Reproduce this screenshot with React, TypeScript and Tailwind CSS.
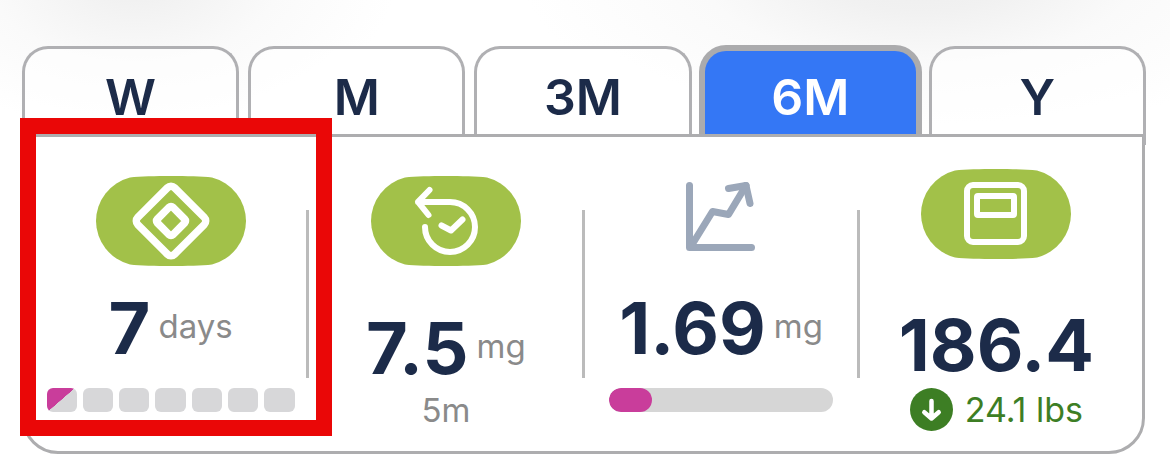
import type { ReactNode } from "react";

const ranges = ["W", "M", "3M", "6M", "Y"];

function Pill({ children }: { children: ReactNode }) {
  return (
    <svg viewBox="0 0 150 90" className="h-[90px] w-[150px] shrink-0" fill="none" aria-hidden="true">
      <path
        d="M0 45A45 45 0 0 1 34 1.500C44 .3 60 0 75 0S106 .3 116 1.500A45 45 0 0 1 150 45A45 45 0 0 1 116 88.500C106 89.700 90 90 75 90S44 89.700 34 88.500A45 45 0 0 1 0 45Z"
        fill="#a2c149"
      />
      {children}
    </svg>
  );
}

function Value({ value, unit }: { value: string; unit?: string }) {
  return (
    <p className="flex items-center justify-center gap-2 whitespace-nowrap">
      <span className="text-[72px] leading-[72px] font-bold text-[#1c2b49]">{value}</span>
      {unit && <span className="pb-1 text-[33px] leading-10 text-[#8a8a8a]">{unit}</span>}
    </p>
  );
}

function Cell({ children, divider = true, overlay }: { children: ReactNode; divider?: boolean; overlay?: ReactNode }) {
  return (
    <section className="relative flex min-w-0 flex-1">
      <div className="flex min-w-0 flex-1 flex-col items-center">{children}</div>
      {divider && <span className="-mr-px -ml-0.5 mt-[73px] h-[168px] w-[3px] shrink-0 bg-[#bbbbbb]" />}
      {overlay}
    </section>
  );
}

export default function App() {
  return (
    <main className="w-full overflow-hidden bg-white bg-[radial-gradient(ellipse_260px_150px_at_135px_-20px,#eeeeee,#fafafa_55%,transparent),radial-gradient(ellipse_400px_170px_at_920px_-30px,#ededed,#f1f1f1_25%,#fafafa_55%,transparent)] pt-[45px] pr-[25px] pb-[18px] pl-[22px] font-['Inter','Liberation_Sans',sans-serif]">
      <nav aria-label="Time range" className="-mr-px flex h-[89px] items-end gap-[9px]">
        {ranges.map((range) =>
          range === "6M" ? (
            <button
              key={range}
              type="button"
              aria-pressed="true"
              className="-mx-0.5 h-[89px] flex-1 rounded-t-[27px] border-[6px] border-b-0 border-[#ababad] bg-[#3477f5] pt-2 text-[50px] leading-[60px] font-semibold text-white"
            >
              {range}
            </button>
          ) : (
            <button
              key={range}
              type="button"
              aria-pressed="false"
              className="relative h-[88px] flex-1 rounded-t-[26px] border-[3px] border-b-0 border-[#b0b0b3] bg-white/50 pt-2.5 text-[50px] leading-[60px] font-semibold text-[#1c2b49]"
            >
              {range}
              {range === "Y" && <span className="absolute top-full -right-[3px] h-[11px] w-[3px] bg-[#b0b0b3]" />}
            </button>
          ),
        )}
      </nav>

      <div className="flex rounded-b-[36px] border-[3px] border-[#adadaf] bg-white px-2 pb-5">
        <Cell
          overlay={
            <span className="pointer-events-none absolute -top-[19px] -right-6 -bottom-[5px] -left-[13px] z-10 border-[16px] border-[#ea0707]" />
          }
        >
          <div className="mt-[39px] mb-[26px] flex">
            <Pill>
              <g stroke="#fff" strokeWidth="7.500">
                <rect x="49" y="19" width="52" height="52" rx="5" transform="rotate(45 75 45)" />
                <rect x="64" y="34" width="22" height="22" rx="2.500" transform="rotate(45 75 45)" />
              </g>
            </Pill>
          </div>
          <Value value="7" unit="days" />
          <div className="mt-6 flex w-[248px] gap-1.5">
            {[0, 1, 2, 3, 4, 5, 6].map((day) => (
              <span
                key={day}
                className={
                  day === 0
                    ? "h-6 flex-1 rounded-md bg-[linear-gradient(139deg,#c93d9b_48%,#d7d7d9_49%)]"
                    : "h-6 flex-1 rounded-md bg-[#d7d7d9]"
                }
              />
            ))}
          </div>
        </Cell>

        <Cell>
          <div className="mt-[39px] mb-[46px] flex">
            <Pill>
              <g stroke="#fff" strokeWidth="6" strokeLinecap="round" strokeLinejoin="round">
                <path d="M58.500 14 47 25.800 57.500 39M47 26H79A25 25 0 1 1 54 51" />
                <path d="M70.500 49.500 80 54.500 91.500 43.500" />
              </g>
            </Pill>
          </div>
          <Value value="7.5" unit="mg" />
          <p className="mt-1.5 text-[33px] leading-10 text-[#8a8a8a]">5m</p>
        </Cell>

        <Cell>
          <svg
            viewBox="0 0 70 70"
            className="mt-[45px] mb-10 h-[70px] w-[70px] shrink-0"
            fill="none"
            stroke="#9ba7b9"
            strokeWidth="7"
            strokeLinecap="round"
            strokeLinejoin="round"
            aria-hidden="true"
          >
            <path d="M3.500 3.500V65.500H65.500" />
            <path d="M5.500 63.500 26.500 29.500 42.500 32.500 60 3.500" />
            <path d="M42.500 6.500 60 3.500 64 21.500" />
          </svg>
          <Value value="1.69" unit="mg" />
          <div className="mt-6 flex h-6 w-56 overflow-hidden rounded-full bg-[#d6d6d6]">
            <span className="w-[43px] rounded-full bg-[#c93d9b]" />
          </div>
        </Cell>

        <Cell divider={false}>
          <div className="mt-8 mb-[50px] flex">
            <Pill>
              <g stroke="#fff" strokeWidth="6">
                <rect x="46" y="16" width="57" height="57" rx="6" />
                <rect x="56" y="27" width="37" height="19" rx="1" />
              </g>
            </Pill>
          </div>
          <Value value="186.4" />
          <p className="mt-[7px] flex items-center gap-3 whitespace-nowrap text-[34px] leading-10 text-[#3d7e24]">
            <svg viewBox="0 0 43 43" className="size-[43px]" fill="none" aria-hidden="true">
              <circle cx="21.500" cy="21.500" r="21.500" fill="#3d7e24" />
              <path
                d="M21.500 13V30M14.300 24.200 21.500 30.500 28.700 24.200"
                stroke="#fff"
                strokeWidth="4.500"
                strokeLinecap="round"
                strokeLinejoin="round"
              />
            </svg>
            24.1 lbs
          </p>
        </Cell>
      </div>
    </main>
  );
}
